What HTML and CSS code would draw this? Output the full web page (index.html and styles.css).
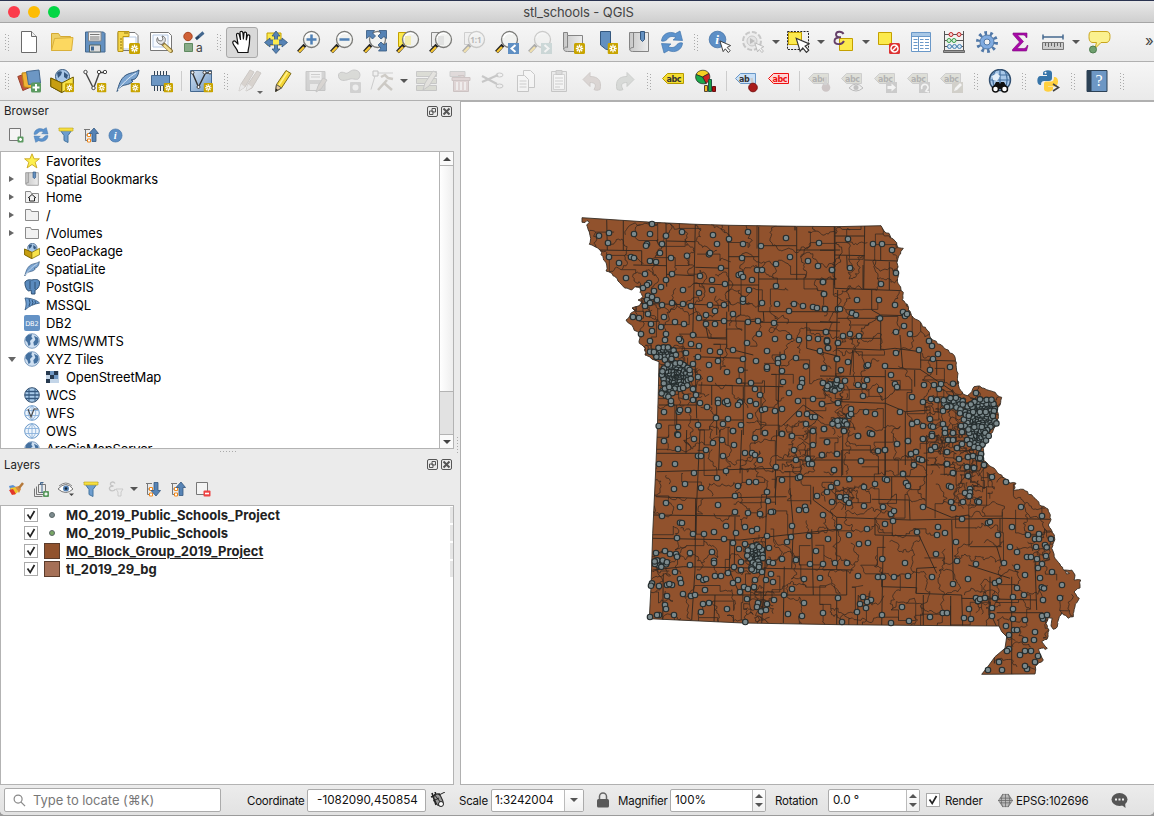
FILE: index.html
```html
<!DOCTYPE html>
<html lang="en">
<head>
<meta charset="utf-8">
<title>stl_schools - QGIS</title>
<link rel="stylesheet" href="styles.css">
</head>
<body>
<svg class="paints" width="0" height="0">
  <defs>
    <linearGradient id="steel" x1="0" y1="0" x2="1" y2="1"><stop offset="0" stop-color="#d3e2f2"/><stop offset="1" stop-color="#6b95c4"/></linearGradient>
    <linearGradient id="paper" x1="0" y1="0" x2="1" y2="0"><stop offset="0" stop-color="#c8c8c8"/><stop offset="1" stop-color="#ededed"/></linearGradient>
  </defs>
</svg>
<svg class="symbols">
  <symbol id="star-badge" viewBox="0 0 11 11"><rect width="11" height="11" rx="1.500" fill="#c8a400"/><path d="M5.500 1.500v8M1.800 5.500h7.400M2.800 2.800l5.400 5.400M8.200 2.800L2.800 8.200" stroke="#fff" stroke-width="1.300"/><circle cx="5.500" cy="5.500" r="1" fill="#c8a400"/></symbol>
  <symbol id="new" viewBox="0 0 24 24"><path d="M4.500 1.500h10l5 5v16h-15z" fill="#fff" stroke="#6a6a6a"/><path d="M14.500 1.500v5h5" fill="#eee" stroke="#6a6a6a"/></symbol>
  <symbol id="open" viewBox="0 0 24 24"><path d="M1.500 20.500v-17h7l2 3h10v3" fill="#edd067" stroke="#d4a931"/><path d="M1.500 20.500l3-12 18.500-1-1.500 13z" fill="#fcd860" stroke="#d9b03a"/></symbol>
  <symbol id="save" viewBox="0 0 24 24"><path d="M2.500 2h18l1.500 1.500v18.500h-19.500z" fill="#6390c0" stroke="#44688f"/><path d="M5.500 2h12.500v9h-12.500z" fill="#f2f2f2" stroke="#888"/><path d="M7 4.500h9.500M7 7h9.500M7 9h9.500" stroke="#777"/><path d="M6.500 15h11v7h-11z" fill="#ddd" stroke="#566"/><path d="M8 16.500h3v4H8z" fill="#3f6690"/></symbol>
  <symbol id="layout" viewBox="0 0 24 24"><path d="M2 2.500h17l3 3v15H2z" fill="#fff" stroke="#777"/><path d="M6 7h14v12H6z" fill="none" stroke="#b7cae4"/><path d="M2 1.500h11v5H7v15H2z" fill="#f5d64c" stroke="#b99513"/><path d="M9 2v2M11 2v2M4 9h2M4 12h2M4 15h2M4 18h2" stroke="#8c7410"/><use href="#star-badge" x="13" y="13" width="11" height="11"/></symbol>
  <symbol id="manager" viewBox="0 0 24 24"><path d="M1.500 2.500h18l3 3v15h-21z" fill="#fff" stroke="#777"/><path d="M4 5h15v12H4z" fill="#f7faff" stroke="#b7cae4"/><path d="M13 13l9 8" stroke="#8c7433" stroke-width="4" stroke-linecap="round"/><path d="M15.500 15.500l6 5.500" stroke="#f1dc8e" stroke-width="2.400" stroke-linecap="round"/><path d="M8.500 7.500l1 3 3 .5 1.500-2-1-3c3 .5 4 3 3 5.500l-3 3c-4 0-6.500-3-4.500-7z" fill="#e4e4e4" stroke="#777"/></symbol>
  <symbol id="style" viewBox="0 0 24 24"><circle cx="6" cy="6.500" r="4.200" fill="#cf6035" stroke="#a8441f"/><path d="M14 9l7.500-6.500" stroke="#44688f" stroke-width="3"/><path d="M14 9l3-2.500" stroke="#26415e" stroke-width="2"/><path d="M2.500 13.500h8v8h-8z" fill="#87ab87" stroke="#5f8a60"/><text x="14" y="22" class="ic-sans">a</text></symbol>
  <symbol id="pan" viewBox="0 0 24 24"><path d="M8 22.500C7.500 19 4.500 17 3 13.500 2 11.500 4 10 5.500 11.500L8 14 6.500 5C6.300 3 8.700 2.600 9.200 4.500l1.300 5-.5-6.700c0-2 2.600-2 2.900 0l.5 6.200.6-5.700c.2-1.800 2.600-1.500 2.600.3l-.3 6.200 1-4c.5-1.600 2.700-1.200 2.500.6L19.300 14c-.3 4-1.300 5-1.300 8.500z" fill="#fff" stroke="#111" stroke-width="1.200" stroke-linejoin="round"/></symbol>
  <symbol id="pan-sel" viewBox="0 0 24 24"><path d="M3 3h14v12H3z" fill="#fcea4d" stroke="#c4a000"/><path d="M12 1l4 5h-2.500v4H18V8l5.500 4.500L18 17v-2.500h-4.500V19H16l-4 4.500L8 19h2.500v-4.500H6V17L.5 12.500 6 8v2h4.500V6H8z" fill="#5683b5" stroke="#35587f" stroke-width=".8"/><path d="M9 9.500h6v5H9z" fill="#fcea4d"/></symbol>
  <symbol id="lens" viewBox="0 0 24 24"><path d="M8 15L1.500 22" stroke="#222" stroke-width="4"/><path d="M7 17l-5 5" stroke="#f5c431" stroke-width="2.300"/><circle cx="14.500" cy="9.500" r="8" fill="#f1f2f0" stroke="#7b7b78" stroke-width="1.300"/><path d="M8.500 8c1-4 5-6 9-4" fill="none" stroke="#fff" stroke-width="1.500"/></symbol>
  <symbol id="zin" viewBox="0 0 24 24"><use href="#lens" width="24" height="24"/><path d="M14.500 4.500v10M9.500 9.500h10" stroke="#4f80b6" stroke-width="2.500"/></symbol>
  <symbol id="zout" viewBox="0 0 24 24"><use href="#lens" width="24" height="24"/><path d="M9.500 9.500h10" stroke="#4f80b6" stroke-width="2.500"/></symbol>
  <symbol id="zfull" viewBox="0 0 24 24"><use href="#lens" width="24" height="24"/><path d="M3.500.5h8l-2 2.500 3 3-3 3-3-3-3 2.500zM23.500.5v8l-2.500-2-3 2.500-3-3 3-3-2-2.500zM23.500 21h-8l2.500-3-3-3 3-3 3 3 2.500-2z" fill="#5683b5" stroke="#35587f" stroke-width=".8"/></symbol>
  <symbol id="zsel" viewBox="0 0 24 24"><path d="M2.500 2.500h12v14h-12z" fill="#fcea4d" stroke="#c4a000"/><use href="#lens" width="24" height="24"/><path d="M9 6h6v9H9z" fill="#f3eaa0" opacity=".8"/></symbol>
  <symbol id="zlayer" viewBox="0 0 24 24"><path d="M2.500 2.500h12v14h-12z" fill="#eee" stroke="#888"/><use href="#lens" width="24" height="24"/><path d="M9 6h6v9H9z" fill="#ddd" opacity=".8"/></symbol>
  <symbol id="znative" viewBox="0 0 24 24"><path d="M2.500 2.500h10v12h-10z" fill="#eee" stroke="#888"/><use href="#lens" width="24" height="24"/><text x="8.200" y="13" class="ic-tiny">1:1</text></symbol>
  <symbol id="zlast" viewBox="0 0 24 24"><use href="#lens" width="24" height="24"/><path d="M13 13h11v11H13z" fill="#5f8fc3"/><path d="M20.500 15l-4 3.500 4 3.500" fill="none" stroke="#fff" stroke-width="2"/></symbol>
  <symbol id="znext" viewBox="0 0 24 24"><use href="#lens" width="24" height="24"/><path d="M13 13h11v11H13z" fill="#8aa"/><path d="M16.500 15l4 3.500-4 3.500" fill="none" stroke="#fff" stroke-width="2"/></symbol>
  <symbol id="newmap" viewBox="0 0 24 24"><path d="M2.500 2.500h4v3h15v16h-15c-3 0-4-1-4-4z" fill="url(#paper)" stroke="#848484"/><path d="M6.500 5.500v12c-1.500-1-3 0-3.500 1" fill="none" stroke="#848484"/><use href="#star-badge" x="13" y="13" width="11" height="11"/></symbol>
  <symbol id="newbm" viewBox="0 0 24 24"><path d="M6.500 1.500h10v19l-5-1.500-5-4z" fill="#6390c0" stroke="#35587f"/><use href="#star-badge" x="13.500" y="13" width="11" height="11"/></symbol>
  <symbol id="bookmark" viewBox="0 0 24 24"><path d="M2.500 2.500h19v19h-16c-2 0-3-1-3-3z" fill="url(#paper)" stroke="#848484"/><path d="M6.500 2.500v15c-2 0-3.500.5-3.500 2" fill="none" stroke="#848484"/><path d="M13.500 1.500h4v8l-2 2-2-2z" fill="#6390c0" stroke="#35587f"/></symbol>
  <symbol id="refresh" viewBox="0 0 24 24"><path d="M1.500 11C2 4 9 .5 15.500 3.500L20 1l2.500 9.500-9.500-.5 3-2.500c-4-2-7-1-9 2-1.500 1.500-3.500 2-5.500 1.500z" fill="#5d93cd" stroke="#4377ad" stroke-width=".7"/><path d="M22.500 13C22 20 15 23.500 8.500 20.500L4 23l-2.500-9.500 9.500.5-3 2.500c4 2 7 1 9-2 1.500-1.500 3.500-2 5.500-1.500z" fill="#5d93cd" stroke="#4377ad" stroke-width=".7"/></symbol>
  <symbol id="info" viewBox="0 0 24 24"><circle cx="12" cy="12" r="10.500" fill="#5d8fc6" stroke="#4474a8"/><text x="9" y="18" class="ic-info">i</text></symbol>
  <symbol id="cursor" viewBox="0 0 14 14"><path d="M1 1l3.500 11.500 2.300-3 3.200 4 2-2-3.200-3.500L12.500 6z" fill="#fff" stroke="#333"/></symbol>
  <symbol id="identify" viewBox="0 0 24 24"><use href="#info" x="0" y="0" width="19" height="19"/><use href="#cursor" x="11" y="10" width="13" height="13"/></symbol>
  <symbol id="gear" viewBox="0 0 24 24"><circle cx="12" cy="12" r="9" fill="none" stroke="#5078a8" stroke-width="4" stroke-dasharray="2.600 3.055"/><circle cx="12" cy="12" r="7" fill="#80abe0" stroke="#5078a8"/><circle cx="12" cy="12" r="3" fill="#f2f2f2" stroke="#5078a8"/></symbol>
  <symbol id="action" viewBox="0 0 24 24"><circle cx="11" cy="11" r="9" fill="#e6e6e6" stroke="#777" stroke-width="2" stroke-dasharray="5 2"/><circle cx="11" cy="11" r="5" fill="#ccc" stroke="#777"/><path d="M9 8l5 3-5 3z" fill="#555"/><use href="#cursor" x="13" y="12" width="11" height="11"/></symbol>
  <symbol id="select" viewBox="0 0 24 24"><path d="M1.500 1.500h21v18h-21z" fill="none" stroke="#222" stroke-dasharray="2 1.200"/><path d="M2.500 2.500h13v12h-13z" fill="#fcea4d" stroke="#c4a000"/><use href="#cursor" x="9" y="7" width="16" height="16"/></symbol>
  <symbol id="selexpr" viewBox="0 0 24 24"><path d="M8.500 8.500h13v12h-13z" fill="#fcea4d" stroke="#c4a000"/><path d="M12.500 4C11 .8 5 1 5 4.500c0 2 2 2.800 5 2.800C6 7.300 3.500 8 3.500 11c0 4 7.500 4.200 9.500 0" fill="none" stroke="#653f68" stroke-width="1.900"/></symbol>
  <symbol id="deselect" viewBox="0 0 24 24"><path d="M2.500 2.500h13v12h-13z" fill="#fcea4d" stroke="#c4a000"/><rect x="13" y="13" width="11" height="11" rx="1.500" fill="#d33"/><circle cx="18.500" cy="18.500" r="3.500" fill="none" stroke="#fff" stroke-width="1.500"/><path d="M16 21l5-5" stroke="#fff" stroke-width="1.500"/></symbol>
  <symbol id="table" viewBox="0 0 24 24"><path d="M2.500 2.500h19v19h-19z" fill="#fff" stroke="#6a98c8"/><path d="M3 3h18v3H3z" fill="#a9c8e6"/><path d="M3 6.500h18M9.500 7v14M4.500 9.500h4M4.500 12.500h4M4.500 15.500h4M4.500 18.500h4M11 9.500h3.500M16 9.500h4M11 12.500h3.500M16 12.500h4M11 15.500h3.500M16 15.500h4M11 18.500h3.500M16 18.500h4" stroke="#6a98c8"/></symbol>
  <symbol id="abacus" viewBox="0 0 24 24"><path d="M2.500 1v20M21.500 1v20M3 4.500h18M3 10.500h18M3 16.500h18" stroke="#555"/><path d="M1.500 20.500h21v2h-21z" fill="#999" stroke="#666"/><g fill="#f6d5d5" stroke="#bf2424"><circle cx="9" cy="4.500" r="2"/><circle cx="17" cy="4.500" r="2"/></g><g fill="#d9f1db" stroke="#3a9e48"><circle cx="7" cy="10.500" r="2"/><circle cx="12" cy="10.500" r="2"/></g><g fill="#d7e6f3" stroke="#4580b4"><circle cx="7.500" cy="16.500" r="2"/><circle cx="12.500" cy="16.500" r="2"/><circle cx="17.500" cy="16.500" r="2"/></g></symbol>
  <symbol id="sigma" viewBox="0 0 24 24"><path d="M5 3h14v4.500h-1c-.5-2-1.500-2.500-3.500-2.500H9.500l6 6.500-6.500 7h6.500c2 0 3-1 3.500-3h1L18.500 21H4.500v-1.500l7-7.500L5 4.500z" fill="#a80aa8" stroke="#7d087d" stroke-width=".6"/></symbol>
  <symbol id="measure" viewBox="0 0 24 24"><path d="M2 7h20M2 4.500v5M22 4.500v5" stroke="#44688f" stroke-width="1.500"/><path d="M1.500 12.500h21v7h-21z" fill="#ccc" stroke="#777"/><path d="M4.500 13v3M7.500 13v4M10.500 13v3M13.500 13v4M16.500 13v3M19.500 13v4" stroke="#666"/></symbol>
  <symbol id="tip" viewBox="0 0 24 24"><path d="M5 1.500h14c3 0 4 1.500 4 5s-1 6-4 6h-5l-6 6 1.500-6H6c-3 0-4-2-4-6s1-5 3-5z" fill="#fbf18f" stroke="#c9a51c"/><circle cx="6" cy="19.500" r="3.500" fill="#6fa06f" stroke="#4d7b4d"/></symbol>
  <symbol id="datasrc" viewBox="0 0 24 24"><path d="M.8 7.500l8-3 4 14-7 3z" fill="#c2543a" stroke="#98402c"/><path d="M5 4l10-1 1 16-9-1z" fill="#f0b236" stroke="#b98217"/><path d="M9.500 2.500L22 1l1.500 13-12 1.500z" fill="#6d97c4" stroke="#44688f"/><rect x="14" y="13.500" width="10" height="10" rx="1.500" fill="#5b9a60"/><path d="M19 15v7M15.500 18.500h7" stroke="#fff" stroke-width="2"/></symbol>
  <symbol id="globe" viewBox="0 0 24 24"><circle cx="12" cy="12" r="11" fill="#cfe0f2" stroke="#4b76a5"/><path d="M3 6c3-4 7-4.500 9-4l-1 4 2 2-4 4 1 5-3 3-2-6-3-3zM15 4l6 3 1 6-3 5-4 1-1-5 3-4z" fill="#44709f"/></symbol>
  <symbol id="gpkg" viewBox="0 0 24 24"><circle cx="12.500" cy="7.500" r="7" fill="#a9c8e8" stroke="#35587f"/><path d="M7 4c2-2 4-2 5-1l-1 3-3 3zM14 3l4 3-1 4-3-2z" fill="#35587f"/><path d="M.8 9l11 5 11.500-6v9.500l-11.500 6-11-6z" fill="#f8e34b" stroke="#6d5a00"/><path d="M.8 9l11 5v9.500l-11-6z" fill="#c79e10" stroke="#6d5a00"/></symbol>
  <symbol id="gpkgnew" viewBox="0 0 24 24"><use href="#gpkg" width="24" height="24"/><use href="#star-badge" x="15" y="14" width="9" height="9.500"/></symbol>
  <symbol id="shp" viewBox="0 0 24 24"><path d="M2.500 3.500l8 16 6-16h6" fill="none" stroke="#444" stroke-width="1.400"/><g fill="#fff" stroke="#444"><circle cx="2.500" cy="3" r="1.700"/><circle cx="10.500" cy="19" r="1.700"/><circle cx="16" cy="3" r="1.700"/><circle cx="22" cy="3" r="1.700"/></g><use href="#star-badge" x="14" y="14" width="9.500" height="9.500"/></symbol>
  <symbol id="feather" viewBox="0 0 24 24"><path d="M1 22.500C3 16 4 10 10 6c4-2.500 9-2 13-5-.5 4-1 6-4 9l-4 1 2 1c-3 4-8 3.500-11 5-2 1-3 3-5 5.500z" fill="#7ba4d0" stroke="#36597f"/><path d="M2 21C7 14 12 9 20 4" fill="none" stroke="#e0ecf8"/></symbol>
  <symbol id="feathernew" viewBox="0 0 24 24"><use href="#feather" width="24" height="24"/><use href="#star-badge" x="14.500" y="14" width="9.500" height="9.500"/></symbol>
  <symbol id="chip" viewBox="0 0 24 24"><path d="M5.500 2v20M8.500 2v20M11.500 2v20M14.500 2v20M17.500 2v20" stroke="#345"/><path d="M2.500 6.500h18v10h-18z" fill="#6d97c4" stroke="#44688f"/><use href="#star-badge" x="14.500" y="14" width="9.500" height="9.500"/></symbol>
  <symbol id="virt" viewBox="0 0 24 24"><path d="M1.500 1.500h21v21h-21z" fill="url(#steel)" stroke="#44688f"/><path d="M3.500 4l6 14 7-14h5" fill="none" stroke="#333" stroke-width="1.400"/><g fill="#fff" stroke="#444"><circle cx="3.500" cy="3.500" r="1.500"/><circle cx="9.500" cy="18" r="1.500"/><circle cx="15.500" cy="3.500" r="1.500"/><circle cx="21" cy="3.500" r="1.500"/></g><use href="#star-badge" x="14.500" y="14" width="9.500" height="9.500"/></symbol>
  <symbol id="pencils" viewBox="0 0 24 24"><path d="M1 22l2-7L12 1l4 2L7 18zM8 22l2-7 9-13 4 2-9 15z" fill="#a99a8c" stroke="#80756c"/><path d="M1 22l2-7 4 3zM8 22l2-7 4 3z" fill="#ddd"/></symbol>
  <symbol id="pencil" viewBox="0 0 24 24"><path d="M4.500 22.500l1-7L15 1.500l5 3L10.500 19z" fill="#f3d434" stroke="#7e6b1b"/><path d="M8 16l8.500-13" stroke="#fff18b" stroke-width="1.500"/><path d="M4.500 22.500l1-7 5 3.500z" fill="#e5c9a0" stroke="#555"/><path d="M4.500 22.500l.5-3 2 1.500z" fill="#222"/></symbol>
  <symbol id="saveedit" viewBox="0 0 24 24"><path d="M2 2.500h19v19H2z" fill="#999" stroke="#777"/><path d="M5.500 3h12v8h-12z" fill="#eee"/><path d="M7 5.500h9M7 8h9" stroke="#888"/><path d="M6 15h8v6H6z" fill="#ddd"/><path d="M12 23l2-6 5-8 4 2-6 9z" fill="#aaa097" stroke="#777"/></symbol>
  <symbol id="addpoly" viewBox="0 0 24 24"><path d="M2 9C0 4 4 2 8 4c3 1.500 5-3 9-3 6 0 7 5 5 8-1 3-6 0-9 1s-9 3-11-1z" fill="#a9aca2" stroke="#777"/><rect x="13" y="13" width="11" height="11" rx="1" fill="#999"/><circle cx="18.500" cy="18.500" r="3" fill="#eee"/></symbol>
  <symbol id="vertex" viewBox="0 0 24 24"><path d="M6 3.500l-5 17M5 4h18" stroke="#888"/><path d="M3 2h5v5H3z" fill="#eee" stroke="#666"/><path d="M8 21l9-10M11 8l4-2 3 3 5 1M14 14l8 7" stroke="#887f70" stroke-width="2.500" fill="none"/></symbol>
  <symbol id="modify" viewBox="0 0 24 24"><path d="M1.500 2.500h20v5h-20zM1.500 9.500h20v5h-20zM1.500 16.500h20v5h-20z" fill="#afb29c" stroke="#777"/><path d="M8 21l2-7 8-12 4 2-8 13z" fill="#c9c5bb" stroke="#777"/></symbol>
  <symbol id="delete" viewBox="0 0 24 24"><path d="M2 2.500h15v5H2z" fill="#beaaaa" stroke="#888"/><path d="M5.500 11.500h15v11h-15zM4 8.500h18v3H4zM10 6.500h6v2" fill="#c0a1a1" stroke="#8c6f6f"/><path d="M9 13v8M13 13v8M17 13v8" stroke="#fff" stroke-width="1.500"/></symbol>
  <symbol id="cut" viewBox="0 0 24 24"><path d="M1 7l15 8M1 13l16-7" stroke="#777" stroke-width="2"/><ellipse cx="18.500" cy="6" rx="3.500" ry="2" fill="none" stroke="#777"/><ellipse cx="18.500" cy="17" rx="3.500" ry="2" fill="none" stroke="#777"/></symbol>
  <symbol id="copy" viewBox="0 0 24 24"><path d="M9.500 1.500h7l4 4v13h-11z" fill="#fff" stroke="#777"/><path d="M3.500 6.500h7l4 4v12h-11z" fill="#fff" stroke="#777"/><path d="M5.500 12h7M5.500 15h7M5.500 18h7" stroke="#888"/></symbol>
  <symbol id="paste" viewBox="0 0 24 24"><path d="M4.500 2.500h15v20h-15z" fill="#ddd" stroke="#777"/><path d="M6.500 5.500h11v15h-11z" fill="#fff" stroke="#999"/><path d="M9 1.500h6v4H9z" fill="#aaa" stroke="#777"/><path d="M8 9h8M8 12h8M8 15h8M8 18h5" stroke="#888"/></symbol>
  <symbol id="undo" viewBox="0 0 24 24"><path d="M3 10.500l7-7v4c8 0 12 4 10 13-3 1-4 1-6 0 3-5 1-7-4-7v4z" fill="#b1a19b" stroke="#8d7f7a"/></symbol>
  <symbol id="redo" viewBox="0 0 24 24"><path d="M21 10.500l-7-7v4c-8 0-12 4-10 13 3 1 4 1 6 0-3-5-1-7 4-7v4z" fill="#a8aea8" stroke="#838983"/></symbol>
  <symbol id="label" viewBox="0 0 24 24"><path d="M1.500 9.500l5-5h16v10h-16z" fill="#f4dd31" stroke="#b59a00"/><text x="5.500" y="12.500" class="ic-abc">abc</text></symbol>
  <symbol id="labelgrey" viewBox="0 0 24 24"><path d="M1.500 9.500l5-5h15v10h-15z" fill="#b8baa6" stroke="#888"/><text x="5" y="12.500" class="ic-abc">abc</text></symbol>
  <symbol id="diagram" viewBox="0 0 24 24"><path d="M8.500 8L2 5.500c2-5 10-6 13-1z" fill="#f5cf22" stroke="#222" stroke-width=".7"/><path d="M8.500 8L15 4.500c2 4 0 8-3 10z" fill="#c22" stroke="#222" stroke-width=".7"/><path d="M8.500 8l3.500 6.500C6 16 0 12 2 5.500z" fill="#1ba84a" stroke="#222" stroke-width=".7"/><path d="M10.500 16.500h3v6h-3z" fill="#f4b81f" stroke="#543"/><path d="M14.500 10.500h3v12h-3z" fill="#18a548" stroke="#254"/><path d="M18.500 17.500h3v5h-3z" fill="#b10d0d" stroke="#611"/></symbol>
  <symbol id="pinlabel" viewBox="0 0 24 24"><path d="M1.500 9.500l5-5h15v10h-15z" fill="#c9e0f7" stroke="#6a98c8"/><text x="5" y="12.500" class="ic-abc">ab</text><path d="M17.500 9l1.500 9" stroke="#ccc" stroke-width="2.500"/><circle cx="19" cy="18.500" r="4.300" fill="#a81c1c" stroke="#7c1212"/></symbol>
  <symbol id="redlabel" viewBox="0 0 24 24"><path d="M1.500 9.500l5-5h15v10h-15z" fill="#ffd6d6" stroke="#e11"/><text x="5.500" y="12.500" class="ic-abc ic-red">abc</text></symbol>
  <symbol id="g1" viewBox="0 0 24 24"><use href="#labelgrey" width="24" height="24"/><circle cx="19" cy="18.500" r="4.300" fill="#8d7777"/><path d="M18.500 8v8" stroke="#999" stroke-width="3"/></symbol>
  <symbol id="g2" viewBox="0 0 24 24"><use href="#labelgrey" width="24" height="24"/><path d="M9 19q7-8 14 0-7 6-14 0z" fill="#eee" stroke="#555"/><circle cx="16" cy="18.500" r="2.500" fill="#666"/></symbol>
  <symbol id="g3" viewBox="0 0 24 24"><use href="#labelgrey" width="24" height="24"/><path d="M13 13h11v11H13z" fill="#888"/><path d="M14.500 17h4v-2.500l4.500 4-4.500 4V20h-4z" fill="#fff"/></symbol>
  <symbol id="g4" viewBox="0 0 24 24"><use href="#labelgrey" width="24" height="24"/><path d="M13 13h11v11H13z" fill="#888"/><path d="M16 20a3.200 3.200 0 1 1 4 1.500M22 19l-2 3 3 1" fill="none" stroke="#fff" stroke-width="1.700"/></symbol>
  <symbol id="g5" viewBox="0 0 24 24"><use href="#labelgrey" width="24" height="24"/><path d="M13 13h11v11H13z" fill="#999483"/><path d="M15 22l1-3 5-5 2 2-5 5z" fill="#fff"/></symbol>
  <symbol id="metasearch" viewBox="0 0 24 24"><circle cx="12" cy="11" r="10.500" fill="#a8c7e8" stroke="#2f4c6c" stroke-width="1.400"/><path d="M3 6h18M1.500 11h21M12 .5v20M7 2c-3 6-3 11 0 17M17 2c3 6 3 11 0 17" fill="none" stroke="#45709e" stroke-width="1.200"/><path d="M4 7l5-3 3 3-3 5-4-1z" fill="#e5eff9"/><path d="M4 20l4-7h3l1 2 1-2h3l4 7z" fill="#111"/><circle cx="7.500" cy="20" r="3" fill="#fff" stroke="#111" stroke-width="1.500"/><circle cx="16.500" cy="20" r="3" fill="#fff" stroke="#111" stroke-width="1.500"/></symbol>
  <symbol id="python" viewBox="0 0 24 24"><path d="M7 6V4c0-3 9-4 9 0v5c0 2-1 3-3 3H8c-2 0-3 1-3 4H4C.5 16 .5 7 4 7h7V6z" fill="#3775a9"/><path d="M17 18v2c0 3-9 4-9 0v-5c0-2 1-2.500 3-2.500h4c2 0 3-1.500 3-4.500h1c4 0 4 9 0 9.500h-7v.5z" fill="#ffd03f"/><circle cx="9.500" cy="3.700" r="1" fill="#fff"/><path d="M17 15l5.500 3.500L17 22" fill="none" stroke="#444" stroke-width="1.600"/></symbol>
  <symbol id="help" viewBox="0 0 24 24"><path d="M2 1.500h20v21H2z" fill="#6d97c4" stroke="#2c4155"/><path d="M2 1.500h4.500v21H2z" fill="#2c4155"/><text x="10.500" y="17" class="ic-help">?</text></symbol>
  <symbol id="addsel" viewBox="0 0 16 16"><path d="M1.500 1.500h11v12h-11z" fill="#f4f4f4" stroke="#777"/><rect x="9.500" y="9.500" width="6" height="6" rx="1" fill="#5b9a60"/><path d="M11 12.500h3M12.500 11v3" stroke="#fff" stroke-width="1.600"/></symbol>
  <symbol id="remsel" viewBox="0 0 16 16"><path d="M1.500 1.500h11v12h-11z" fill="#f4f4f4" stroke="#777"/><rect x="8.500" y="9.500" width="7" height="6" rx="1" fill="#ee4343"/><path d="M10 12.500h4" stroke="#fff" stroke-width="1.600"/></symbol>
  <symbol id="filter" viewBox="0 0 16 16"><path d="M1 1.500h14l-5 7v7l-4-2v-5z" fill="#6d9dcf" stroke="#44749f"/><path d="M1 1h14v3H1z" fill="#f5df42" stroke="#bfa414" stroke-width=".6"/></symbol>
  <symbol id="treeup" viewBox="0 0 16 16"><path d="M1 2.500h6M2.500 2.500v11h3M2.500 8h3" fill="none" stroke="#777"/><path d="M4.500 6.500h3v3h-3zM4.500 12h3v3h-3z" fill="#fff" stroke="#f28a1c"/><path d="M9 14.500V6.500H6L11 1l4.500 5.500H13v8z" fill="#5683b5" stroke="#35587f" stroke-width=".8"/></symbol>
  <symbol id="treedown" viewBox="0 0 16 16"><path d="M1 2.500h6M2.500 2.500v11h3M2.500 8h3" fill="none" stroke="#777"/><path d="M4.500 6.500h3v3h-3zM4.500 12h3v3h-3z" fill="#fff" stroke="#f28a1c"/><path d="M9 1.500v8H6l5 5.500 4.500-5.500H13v-8z" fill="#5683b5" stroke="#35587f" stroke-width=".8"/></symbol>
  <symbol id="brush" viewBox="0 0 16 16"><path d="M1 5l4-1 3 2-2 5H3z" fill="#5b8fd4"/><path d="M2 7l6-1 2 5-4 3z" fill="#f0c62c"/><path d="M1 9l4-1 3 5-4 1z" fill="#e2382d"/><path d="M7 6l4 6 2-4-2-3z" fill="#d98a3d"/><path d="M11 7l4-5" stroke="#b5793a" stroke-width="2.500"/></symbol>
  <symbol id="addgroup" viewBox="0 0 16 16"><path d="M5.500 3.500h7v8h-7zM3.500 5.500v8h8M1.500 7.500v8h8" fill="none" stroke="#777"/><path d="M9 1v11M7.500 4V1.500h3" stroke="#44688f" fill="none"/><rect x="10" y="10" width="6" height="6" rx="1" fill="#5b9a60"/><path d="M11.500 13h3M13 11.500v3" stroke="#fff" stroke-width="1.300"/></symbol>
  <symbol id="eye" viewBox="0 0 16 16"><path d="M0 8q8-9 15 0-7 7-15 0z" fill="#fff" stroke="#777"/><circle cx="8" cy="7.500" r="3" fill="#5683b5"/><circle cx="8" cy="7.500" r="1.300" fill="#123"/><path d="M1 5q7-6 13 0" fill="none" stroke="#888"/><path d="M11 12.500h5l-2.500 2.500z" fill="#444"/></symbol>
  <symbol id="exprfilter" viewBox="0 0 16 16"><path d="M7 2.500C5.500 0 2 1 2.500 3.500 3 5 5 5 5.500 5 3 5 1 6 1.500 8c.5 2.500 4.500 2.500 6 0" fill="none" stroke="#777" stroke-width="1.300"/><path d="M8 8h7l-2 3v4h-3v-4z" fill="#eee" stroke="#888"/></symbol>
  <symbol id="fav" viewBox="0 0 16 16"><path d="M8 .8l2.100 5h5.300l-4.200 3.500 1.700 5.600L8 11.500l-4.900 3.400 1.700-5.600L.6 5.800h5.300z" fill="#fdf04f" stroke="#c9a61d" stroke-width=".9"/></symbol>
  <symbol id="folder" viewBox="0 0 16 16"><path d="M1.500 13.500v-11h5l1 2h7v9z" fill="#f1f1f1" stroke="#8a8a8a"/></symbol>
  <symbol id="home" viewBox="0 0 16 16"><use href="#folder" width="16" height="16"/><path d="M4 9l4-3.500L12 9M5.500 8.500V12h5V8.500" fill="none" stroke="#222"/></symbol>
  <symbol id="postgis" viewBox="0 0 16 16"><path d="M1 3c2-3 6-2 7-2 3-1 7-1 7.500 2 .5 3-1 6-3 7.500l-1.500.5v4H7.500l-.5-4-2 1C2.500 12 .5 6 1 3z" fill="#5a8abd" stroke="#2e5175"/><path d="M6 2v8M11 3v7" stroke="#2e5175" fill="none"/></symbol>
  <symbol id="mssql" viewBox="0 0 16 16"><path d="M1 1c5 0 12 2 14.500 5C10 7 5 9 1 13c1.500-4 1.500-8 0-12z" fill="#6b9cd0" stroke="#44688f"/><path d="M5 2q2 4 0 7M8 3q2 3 0 5M11 4q1 2 0 3" fill="none" stroke="#2e5175"/></symbol>
  <symbol id="db2" viewBox="0 0 16 16"><rect width="16" height="16" rx="2" fill="#6492c5"/><text x="1.200" y="10.500" class="ic-db2">DB2</text></symbol>
  <symbol id="osm" viewBox="0 0 16 16"><path d="M2 2h13v12H2z" fill="#c3d5e8"/><path d="M2 2h4v4H2zM10 2h4v4h-4zM6 6h4v4H6zM2 10h4v4H2z" fill="#26394f"/><path d="M10 6h4v4h-4zM6 2h4v4H6z" fill="#6e97c4"/></symbol>
  <symbol id="wcs" viewBox="0 0 16 16"><circle cx="8" cy="8" r="7.300" fill="#a9cbea" stroke="#2f4c6c"/><path d="M2 4.500h12M1 8h14M2 11.500h12" stroke="#35587f" stroke-width="1.600"/><path d="M5 1.500v13M11 1.500v13" stroke="#35587f"/></symbol>
  <symbol id="ows" viewBox="0 0 16 16"><circle cx="8" cy="8" r="7.300" fill="#eef5fc" stroke="#6a98c8"/><path d="M1 5.500h14M1 10.500h14M8 1v14M8 1C3 5 3 11 8 15M8 1c5 4 5 10 0 14" fill="none" stroke="#8bb2db" stroke-width=".9"/></symbol>
  <symbol id="wfs" viewBox="0 0 16 16"><use href="#ows" width="16" height="16"/><path d="M4 4l3 8 3-8h4" fill="none" stroke="#444" stroke-width="1.100"/></symbol>
  <symbol id="mouse" viewBox="0 0 16 16"><path d="M2 1l4 12M5 0l4 10M1 5l9-3" stroke="#222" stroke-width="1.600"/><rect x="5" y="2" width="7" height="12" rx="3.500" fill="#999" stroke="#222" transform="rotate(-25 8 8)"/><path d="M9 3l6-3M3 9l6-3M4 2l7 9" stroke="#222"/><circle cx="11" cy="12" r="2.500" fill="#fff" stroke="#222"/></symbol>
  <symbol id="crs" viewBox="0 0 16 16"><path d="M5 1.500h6L15.500 8 11 14.500H5L.5 8z" fill="#bbb" stroke="#777" stroke-width=".8"/><path d="M2 5.500h12M0 8h16M2 10.500h12M8 1v14M5 1C3 6 3 10 5 15M11 1c2 5 2 9 0 14" fill="none" stroke="#666" stroke-width=".8"/></symbol>
  <symbol id="bubble" viewBox="0 0 16 16"><ellipse cx="8" cy="7.500" rx="8" ry="6.500" fill="#555"/><path d="M9 12l5 4-.5-6z" fill="#555"/><path d="M3.500 6.500h2v2h-2zM7 6.500h2v2H7zM10.500 6.500h2v2h-2z" fill="#eee"/></symbol>
</svg>

<div class="window">
  <header class="titlebar">
    <div class="lights"><i class="red"></i><i class="amber"></i><i class="green"></i></div>
    <div class="title">stl_schools - QGIS</div>
  </header>

  <div class="toolbar">
    <i class="grip first"></i>
    <button><svg><use href="#new"/></svg></button><button><svg><use href="#open"/></svg></button><button><svg><use href="#save"/></svg></button><button><svg><use href="#layout"/></svg></button><button><svg><use href="#manager"/></svg></button><button><svg><use href="#style"/></svg></button>
    <i class="grip"></i>
    <button class="active"><svg><use href="#pan"/></svg></button><button><svg><use href="#pan-sel"/></svg></button><button><svg><use href="#zin"/></svg></button><button><svg><use href="#zout"/></svg></button><button><svg><use href="#zfull"/></svg></button><button><svg><use href="#zsel"/></svg></button><button><svg><use href="#zlayer"/></svg></button><button class="off"><svg><use href="#znative"/></svg></button><button><svg><use href="#zlast"/></svg></button><button class="off"><svg><use href="#znext"/></svg></button><button><svg><use href="#newmap"/></svg></button><button><svg><use href="#newbm"/></svg></button><button><svg><use href="#bookmark"/></svg></button><button><svg><use href="#refresh"/></svg></button>
    <i class="grip"></i>
    <button><svg><use href="#identify"/></svg></button><button class="off"><svg><use href="#action"/></svg></button><i class="drop"></i>
    <button><svg><use href="#select"/></svg></button><i class="drop"></i>
    <button><svg><use href="#selexpr"/></svg></button><i class="drop"></i>
    <button><svg><use href="#deselect"/></svg></button><button><svg><use href="#table"/></svg></button><button><svg><use href="#abacus"/></svg></button><button><svg><use href="#gear"/></svg></button><button><svg><use href="#sigma"/></svg></button><button><svg><use href="#measure"/></svg></button><i class="drop"></i>
    <button><svg><use href="#tip"/></svg></button>
    <span class="more">»</span>
  </div>

  <div class="toolbar">
    <i class="grip first"></i>
    <button><svg><use href="#datasrc"/></svg></button><button><svg><use href="#gpkgnew"/></svg></button><button><svg><use href="#shp"/></svg></button><button><svg><use href="#feathernew"/></svg></button><button><svg><use href="#chip"/></svg></button><i class="sep"></i><button><svg><use href="#virt"/></svg></button>
    <i class="grip"></i>
    <button class="off menu"><svg><use href="#pencils"/></svg></button><button><svg><use href="#pencil"/></svg></button><button class="off"><svg><use href="#saveedit"/></svg></button><button class="off"><svg><use href="#addpoly"/></svg></button><button class="off"><svg><use href="#vertex"/></svg></button><i class="drop"></i>
    <button class="off"><svg><use href="#modify"/></svg></button><button class="off"><svg><use href="#delete"/></svg></button><button class="off"><svg><use href="#cut"/></svg></button><button class="off"><svg><use href="#copy"/></svg></button><button class="off"><svg><use href="#paste"/></svg></button><button class="off"><svg><use href="#undo"/></svg></button><button class="off"><svg><use href="#redo"/></svg></button>
    <i class="grip"></i>
    <button><svg><use href="#label"/></svg></button><button><svg><use href="#diagram"/></svg></button><i class="sep"></i><button><svg><use href="#pinlabel"/></svg></button><button><svg><use href="#redlabel"/></svg></button><i class="sep"></i><button class="off"><svg><use href="#g1"/></svg></button><button class="off"><svg><use href="#g2"/></svg></button><button class="off"><svg><use href="#g3"/></svg></button><button class="off"><svg><use href="#g4"/></svg></button><button class="off"><svg><use href="#g5"/></svg></button>
    <i class="grip"></i><button><svg><use href="#metasearch"/></svg></button>
    <i class="grip"></i><button><svg><use href="#python"/></svg></button>
    <i class="grip"></i><button><svg><use href="#help"/></svg></button><i class="grip"></i>
  </div>

  <main class="work">
    <aside class="docks">
      <section class="dock browser">
        <div class="dock-head"><span>Browser</span><svg class="dockbtn" viewBox="0 0 11 11"><rect x=".5" y=".5" width="10" height="10" rx="1.500"/><path d="M5 2.500h3.500V6H5zM2.500 5H6v3.500H2.500z"/></svg><svg class="dockbtn" viewBox="0 0 11 11"><rect x=".5" y=".5" width="10" height="10" rx="1.500"/><path d="M2.500 2.500l6 6M8.500 2.500l-6 6" stroke-width="2"/></svg></div>
        <div class="dock-tools"><button><svg><use href="#addsel"/></svg></button><button><svg><use href="#refresh"/></svg></button><button><svg><use href="#filter"/></svg></button><button><svg><use href="#treeup"/></svg></button><button><svg class="small"><use href="#info"/></svg></button></div>
        <div class="tree">
          <ul>
            <li><i></i><svg><use href="#fav"/></svg>Favorites</li>
            <li><i class="closed"></i><svg><use href="#bookmark"/></svg>Spatial Bookmarks</li>
            <li><i class="closed"></i><svg><use href="#home"/></svg>Home</li>
            <li><i class="closed"></i><svg><use href="#folder"/></svg>/</li>
            <li><i class="closed"></i><svg><use href="#folder"/></svg>/Volumes</li>
            <li><i></i><svg><use href="#gpkg"/></svg>GeoPackage</li>
            <li><i></i><svg><use href="#feather"/></svg>SpatiaLite</li>
            <li><i></i><svg><use href="#postgis"/></svg>PostGIS</li>
            <li><i></i><svg><use href="#mssql"/></svg>MSSQL</li>
            <li><i></i><svg><use href="#db2"/></svg>DB2</li>
            <li><i></i><svg><use href="#globe"/></svg>WMS/WMTS</li>
            <li><i class="opened"></i><svg><use href="#globe"/></svg>XYZ Tiles</li>
            <li class="child"><i></i><svg><use href="#osm"/></svg>OpenStreetMap</li>
            <li><i></i><svg><use href="#wcs"/></svg>WCS</li>
            <li><i></i><svg><use href="#wfs"/></svg>WFS</li>
            <li><i></i><svg><use href="#ows"/></svg>OWS</li>
            <li><i></i><svg><use href="#globe"/></svg>ArcGisMapServer</li>
          </ul>
          <div class="scrollbar"><b class="up"></b><span class="track"></span><span class="thumb"></span><b class="down"></b></div>
        </div>
      </section>
      <div class="hsplit"></div>
      <section class="dock layers">
        <div class="dock-head"><span>Layers</span><svg class="dockbtn" viewBox="0 0 11 11"><rect x=".5" y=".5" width="10" height="10" rx="1.500"/><path d="M5 2.500h3.500V6H5zM2.500 5H6v3.500H2.500z"/></svg><svg class="dockbtn" viewBox="0 0 11 11"><rect x=".5" y=".5" width="10" height="10" rx="1.500"/><path d="M2.500 2.500l6 6M8.500 2.500l-6 6" stroke-width="2"/></svg></div>
        <div class="dock-tools"><button><svg><use href="#brush"/></svg></button><button><svg><use href="#addgroup"/></svg></button><button><svg><use href="#eye"/></svg></button><button><svg><use href="#filter"/></svg></button><button class="off"><svg><use href="#exprfilter"/></svg></button><i class="drop"></i><button><svg><use href="#treedown"/></svg></button><button><svg><use href="#treeup"/></svg></button><button><svg><use href="#remsel"/></svg></button></div>
        <ul class="layerlist">
          <li><svg class="check" viewBox="0 0 14 14"><rect x=".5" y=".5" width="13" height="13"/><path d="M3.500 6.500l2.700 4 4.300-7.500"/></svg><i class="dot grey"></i><span>MO_2019_Public_Schools_Project</span></li>
          <li><svg class="check" viewBox="0 0 14 14"><rect x=".5" y=".5" width="13" height="13"/><path d="M3.500 6.500l2.700 4 4.300-7.500"/></svg><i class="dot leaf"></i><span>MO_2019_Public_Schools</span></li>
          <li><svg class="check" viewBox="0 0 14 14"><rect x=".5" y=".5" width="13" height="13"/><path d="M3.500 6.500l2.700 4 4.300-7.500"/></svg><i class="swatch brown"></i><span class="current">MO_Block_Group_2019_Project</span></li>
          <li><svg class="check" viewBox="0 0 14 14"><rect x=".5" y=".5" width="13" height="13"/><path d="M3.500 6.500l2.700 4 4.300-7.500"/></svg><i class="swatch tan"></i><span>tl_2019_29_bg</span></li>
        </ul>
      </section>
    </aside>
    <div class="vsplit"></div>
    <div class="canvas"><svg id="map" viewBox="461 102 693 682" width="693" height="682"></svg></div>
  </main>

  <footer class="status">
    <div class="field locate"><svg viewBox="0 0 14 14"><circle cx="5.500" cy="5.500" r="4.300"/><path d="M8.700 8.700l4.300 4.300"/></svg><span>Type to locate (⌘K)</span></div>
    <label class="l-coord">Coordinate</label>
    <div class="field coord"><span>-1082090,450854</span></div>
    <svg class="mouse"><use href="#mouse"/></svg>
    <label class="l-scale">Scale</label>
    <div class="field scale"><span>1:3242004</span><b><i class="tri"></i></b></div>
    <svg class="lock" viewBox="0 0 12 16"><path d="M2.500 8V4.500a3.500 3.500 0 0 1 7 0V8" fill="none" stroke="#666" stroke-width="1.500"/><rect y="7" width="12" height="8.500" rx="1.500" fill="#5a5a5a"/></svg>
    <label class="l-mag">Magnifier</label>
    <div class="field mag"><span>100%</span><b class="spin"><i class="tri flip"></i><i class="tri"></i></b></div>
    <label class="l-rot">Rotation</label>
    <div class="field rot"><span>0.0 °</span><b class="spin"><i class="tri flip"></i><i class="tri"></i></b></div>
    <svg class="check" viewBox="0 0 14 14"><rect x=".5" y=".5" width="13" height="13"/><path d="M3.500 6.500l2.700 4 4.300-7.500"/></svg>
    <label class="l-render">Render</label>
    <svg class="crs"><use href="#crs"/></svg>
    <label class="l-epsg">EPSG:102696</label>
    <svg class="bubble"><use href="#bubble"/></svg>
  </footer>
</div>
<script src="map.js"></script>
</body>
</html>
```

FILE: styles.css
```css
* { box-sizing: border-box; }
body { margin: 0; width: 1154px; height: 816px; overflow: hidden; background: #9b9b9b; font-family: Inter, "Noto Sans", sans-serif; font-size: 13px; color: #111; }
ul { list-style: none; margin: 0; padding: 0; }
button { border: 0; background: none; padding: 0; margin: 0; flex: none; }
i { flex: none; font-style: normal; }
.paints { position: absolute; }
.symbols { display: none; }
.window { display: flex; flex-direction: column; height: 815px; background: #ebebeb; border-top: 1px solid #2a3350; border-radius: 0 0 5px 5px; overflow: hidden; }

.titlebar { height: 22px; flex: none; display: flex; align-items: center; background: linear-gradient(#e9e9e9, #cfcfcf); border-bottom: 1px solid #a6a6a6; }
.lights { display: flex; gap: 8px; padding-left: 8px; width: 100px; }
.lights i { width: 12px; height: 12px; border-radius: 50%; }
.red { background: #fc3b4b; }
.amber { background: #fdbc02; }
.green { background: #02d644; }
.title { flex: 1; text-align: center; padding-right: 97px; color: #444; letter-spacing: -.1px; }

.toolbar { height: 39px; flex: none; display: flex; align-items: center; background: linear-gradient(#f6f6f6, #eaeaea); border-bottom: 1px solid #b0b0b0; }
.toolbar button { width: 33px; height: 31px; display: grid; place-items: center; position: relative; }
.toolbar svg { width: 24px; height: 24px; }
.toolbar .active { background: #d9d9d9; border: 1px solid #a9a9a9; border-radius: 3px; width: 32px; margin-right: 1px; }
.off svg { opacity: .33; }
.menu::after { content: ""; position: absolute; right: 3px; bottom: 3px; border: 3px solid transparent; border-top-color: #666; border-bottom: 0; }
.grip { width: 15.600px; height: 18px; background: radial-gradient(circle, #aaa 35%, transparent 45%) 5px 0 / 3px 3px repeat-y, radial-gradient(circle, #aaa 35%, transparent 45%) 8px 1px / 3px 3px repeat-y; }
.grip.first { width: 12.500px; background-position: 4px 0, 7px 1px; }
.drop { width: 12.100px; display: grid; place-items: center; }
.drop::after { content: ""; border: 4px solid transparent; border-top-color: #555; border-bottom: 0; }
.sep { width: 7px; height: 20px; background: linear-gradient(90deg, transparent 3px, #ccc 3px, #ccc 4px, transparent 4px); }
.more { margin-left: auto; color: #444; font-size: 15px; padding-bottom: 3px; width: 9px; overflow: hidden; }

.ic-sans { font: 12px Inter, sans-serif; fill: #444; }
.ic-tiny { font: bold 8px "Open Sans", sans-serif; fill: #444; }
.ic-info { font: italic bold 17px "Liberation Serif", serif; fill: #fff; }
.ic-abc { font: bold 8px "DejaVu Sans", sans-serif; letter-spacing: -.4px; fill: #333; }
.ic-red { fill: #e11; }
.ic-help { font: 16px "Liberation Serif", serif; fill: #fff; }
.ic-db2 { font: 6.500px "DejaVu Sans", sans-serif; fill: #fff; }

.work { flex: 1; min-height: 0; display: flex; }
.docks { width: 454px; display: flex; flex-direction: column; }
.dock { display: flex; flex-direction: column; }
.browser { height: 348px; flex: none; }
.layers { flex: 1; min-height: 0; }
.dock-head { height: 20px; flex: none; display: flex; align-items: center; padding: 0 2px 0 4px; font-size: 11.500px; color: #222; }
.layers .dock-head { height: 21px; }
.dock-head span { flex: 1; }
.dockbtn { width: 11px; height: 11px; margin-left: 3px; fill: none; stroke: #555; }
.dock-tools { height: 30px; flex: none; display: flex; align-items: center; padding: 0 0 2px 3px; }
.dock-tools button { width: 25.100px; height: 24px; display: grid; place-items: center; }
.dock-tools .drop { width: 11.500px; }
.dock-tools svg { width: 16px; height: 16px; }
.dock-tools svg.small { width: 15px; height: 15px; }
.tree { flex: 1; min-height: 0; display: flex; border: 1px solid #b3b3b3; background: #fff; overflow: hidden; }
.tree ul { flex: 1; }
.tree li { height: 18px; display: flex; align-items: center; letter-spacing: -.13px; padding-left: 5px; color: #000; }
.tree li i { width: 11px; height: 10px; margin-right: 7px; display: grid; place-items: center; }
.tree li svg { width: 16px; height: 16px; margin-right: 6px; }
.tree li.child { padding-left: 25px; }
.closed::after { content: ""; border: 3.500px solid transparent; border-left: 5px solid #666; border-right: 0; }
.opened::after { content: ""; border: 4px solid transparent; border-top: 5px solid #666; border-bottom: 0; }
.scrollbar { width: 14px; border-left: 1px solid #b3b3b3; display: flex; flex-direction: column; background: linear-gradient(90deg, #fff, #eee); }
.scrollbar b { height: 13px; display: grid; place-items: center; background: #fafafa; }
.scrollbar b::after { content: ""; border: 4px solid transparent; }
.scrollbar .up::after { border-bottom-color: #444; border-top: 0; }
.scrollbar .down::after { border-top-color: #444; border-bottom: 0; }
.track { flex: 1; border-top: 1px solid #b3b3b3; }
.thumb { height: 44px; background: #e2e2e2; border: solid #b3b3b3; border-width: 1px 0; }
.hsplit { height: 5px; flex: none; margin-left: 219px; width: 18px; background: radial-gradient(circle, #aaa 35%, transparent 45%) 0 1px / 3px 3px repeat-x; }
.vsplit { width: 6px; flex: none; background: radial-gradient(circle, #aaa 35%, transparent 45%) 2px 0 / 3px 3px repeat-y; height: 18px; margin-top: 335px; }

.layerlist { flex: 1; border: 1px solid #b3b3b3; background: #fff; }
.layerlist li { height: 18px; display: flex; align-items: center; padding-left: 23px; font-weight: 700; color: #222; background: linear-gradient(#e6e6e6, #e6e6e6) right 1px / 3px 16px no-repeat; }
.layerlist li span { letter-spacing: .03px; }
.layerlist .check { margin-right: 6px; }
.check { width: 14px; height: 14px; flex: none; fill: #fff; stroke: #aaa; }
.check path { fill: none; stroke: #222; stroke-width: 1.700; }
.current { text-decoration: underline; text-underline-offset: 2px; }
.dot { width: 6px; height: 6px; border-radius: 50%; border: 1px solid #5c6868; margin: 0 11px 0 5px; }
.grey { background: #7d8b8f; }
.leaf { background: #79a765; }
.swatch { width: 16px; height: 16px; margin-right: 6px; border: 1px solid #5b3c2b; }
.brown { background: #91522d; }
.tan { background: #a57057; }

.canvas { flex: 1; background: #fff; border-left: 1px solid #b0b0b0; border-top: 1px solid #b0b0b0; border-bottom: 1px solid #b0b0b0; overflow: hidden; }
.canvas svg { display: block; }
.land { fill: #91522d; stroke: #362c24; stroke-width: .9; }
.county { fill: none; stroke: #332821; stroke-width: .95; }
.tract { fill: none; stroke: #332821; stroke-width: .75; }
.school { fill: #7b898c; stroke: #252d2e; stroke-width: 1.150; }

.status { height: 30px; flex: none; display: flex; align-items: center; padding: 0 0 0 4px; font-size: 11.500px; background: linear-gradient(#ececec, #e2e2e2); }
.status label { flex: none; white-space: nowrap; font-size: 11.500px; letter-spacing: -.22px; padding-top: 1px; }
.status svg { flex: none; }
.field { height: 23px; flex: none; display: flex; align-items: center; background: #fff; border: 1px solid #ababab; border-radius: 2px; overflow: hidden; white-space: nowrap; }
.field span { flex: 1; padding-left: 4px; }
.locate { width: 217px; height: 24px; font-size: 13px; letter-spacing: -.05px; color: #777; padding-left: 8px; margin-right: 26px; }
.locate svg { width: 13px; height: 13px; fill: none; stroke: #888; stroke-width: 1.300; margin-right: 3px; }
.status .l-coord { width: 60px; }
.coord { width: 119px; }
.coord span { padding-left: 9px; }
.mouse { width: 16px; height: 16px; margin: 0 13px 0 4px; }
.status .l-scale { width: 32px; }
.scale { width: 93px; }
.scale span, .mag span, .rot span, .coord span { font-size: 11.700px; }
.scale span { padding-left: 3px; letter-spacing: -.1px; }
.field b { width: 19px; align-self: stretch; border-left: 1px solid #bbb; background: linear-gradient(#fff, #f0f0f0); display: grid; place-items: center; }
.field .spin { width: 13px; align-content: center; gap: 5px; }
.tri { border: 4px solid transparent; border-top-color: #555; border-bottom: 0; }
.tri.flip { border-top: 0; border-bottom: 4px solid #555; }
.lock { width: 12px; height: 16px; margin: 0 9px 0 13px; }
.status .l-mag { width: 52px; }
.mag { width: 96px; margin-right: 9px; }
.status .l-rot { width: 53px; }
.rot { width: 92px; margin-right: 6px; }
.status .l-render { width: 54px; padding-left: 5px; }
.crs { width: 15px; height: 15px; margin-left: 4px; }
.status .l-epsg { width: 98px; padding-left: 3px; letter-spacing: -.12px; }
.bubble { width: 17px; height: 16px; }
```

FILE: map.js
```javascript
const NS = 'http://www.w3.org/2000/svg';
const map = document.getElementById('map');

let seed = 29;
function rnd() {
  seed = (seed * 1664525 + 1013904223) % 4294967296;
  return seed / 4294967296;
}
function add(parent, tag, attrs) {
  const el = document.createElementNS(NS, tag);
  for (const k in attrs) el.setAttribute(k, attrs[k]);
  parent.appendChild(el);
  return el;
}
const pairs = s => s.trim().split(/\s+/).map(p => p.split(',').map(Number));

// State boundary: surveyed north line, rivers in the east, surveyed south and west lines.
const north = pairs('582,217.700 606.700,219.300 652,222.300 695.300,224.300 730,225.300 796.700,226.300 840,226.600 881,225.700');
const east = pairs(`884,231 889,233.300 890.700,237.700 895,241 898.300,247.700 903.300,248.300 900.700,251.700 898,258.300 897.300,271.700 898,283.300 903.300,292.300 902,300 907.300,304.300 908.300,310 915,319 921.700,324.300 929.300,332.300 930.700,338.300 940,344.300 948.300,350 955.300,358.300 956,365 958,373.300 957.300,380 959.300,388.300 963.300,394.300 967.300,395.700 971.700,391.700 974,386.700 978.300,386 986.700,389.700 993.300,391.700 1001.700,397.300 1000.700,402.300 996.700,408.300 998.300,418.300 994,428.300 988.300,438.300 983.300,448.300 983,460 991.700,467 1001.700,475 1008.300,481.700 1016,483.300 1013.300,490 1023.300,489.300 1035,498.300 1041.700,506 1048,509 1051,519.300 1048.300,525 1054.300,535 1054,541.700 1051.700,548.300 1055,558.300 1060.700,566 1066.500,574 1069.500,573.500 1064.500,570 1071.700,570 1075,575 1074,580 1080.700,580 1080,588 1074,592 1079.300,598.300 1075,606.700 1073.300,616.700 1068.300,618.300 1061.700,612.700 1059.300,616.700 1057.300,626.700 1053.300,629.300 1051,626 1052.300,618.300 1048,617.700 1046,623.300 1049,630 1047,639.300 1041.700,641.700 1047.300,648.300 1038.300,649.300 1043.300,660 1036.700,665 1035,674`);
const south = pairs('981.700,674.300 988.300,666 995,656.700 1005,648.300 1006.700,636.700 1001.700,631.700 999,626 950,625.700 840,624.700 743,623 649.300,618.700 651,586.700 652.700,533.300 656,463.300 657.300,430 658.300,391.700 659,361.700');
const west = pairs('651.700,359 645,355 645,348.300 639.300,343.300 640,335 633.300,327.700 626,320 630.700,313.300 635,311 632,308 640,305 641.700,301.700 638,300 642.700,296.700 640,292.300 641.700,288.300 635,286.700 631.700,290 623.300,286.700 618,281 611.700,273.300 606,271 606.700,265 603.300,258.300 600,250 595,246.700 589.300,244.300 590.700,238.300 588.300,230 586.700,225 589.300,222.300 587,220.500 585,222.500 582,222.300');

function roughen(pts) {
  const out = [];
  pts.forEach((p, i) => {
    out.push(p);
    const q = pts[i + 1];
    if (!q) return;
    const n = Math.floor(Math.hypot(q[0] - p[0], q[1] - p[1]) / 2.2);
    for (let k = 1; k < n; k++) {
      out.push([p[0] + (q[0] - p[0]) * k / n + (rnd() - .5) * 1.8, p[1] + (q[1] - p[1]) * k / n + (rnd() - .5) * 1.8]);
    }
  });
  return out;
}
const outline = [...north, ...roughen(east), ...south, ...roughen(west)];
const d = 'M' + outline.map(p => p[0].toFixed(1) + ' ' + p[1].toFixed(1)).join('L') + 'Z';
add(add(map, 'clipPath', { id: 'state' }), 'path', { d });
add(map, 'path', { d, class: 'land' });
const lines = add(map, 'g', { 'clip-path': 'url(#state)' });

// Sheets hold coordinates in thirds of a map unit from their own origin.
const sheets = [
  {
    x: 570, y: 205,
    lines: `110,43 112,135;160,46 160,137;288,55 290,245;376,58 372,240 368,400;476,62 476,320;566,65 566,235 565,320;680,65 680,225;795,66 795,135 793,240;80,135 215,137 215,180;290,108 376,110;190,180 290,182;376,187 476,190;476,155 566,155;566,122 680,122;680,135 810,135;290,208 372,212;372,235 476,240 566,240;566,222 800,222;372,298 476,302;566,320 810,320;215,295 372,300;385,345 580,350;560,352 810,352;470,320 470,430 550,450;525,350 525,540;630,440 625,590;710,352 710,430 810,455;370,455 525,460;385,540 640,545;710,375 810,378;375,460 380,640;265,645 520,645;520,545 520,690;625,545 625,690;425,540 425,600;580,320 582,350;408,365 415,400 470,402;267,600 380,600;320,600 320,690;440,600 440,690;573,545 573,690;640,660 700,600 760,640`,
    pts: `87,92 117,84 114,114 192,87 240,87 246,57 288,92 336,81 231,117 228,122 276,117 117,156 147,174 183,156 192,159 270,144 303,159 351,152 240,168 258,171 168,219 225,207 306,207 288,225 273,246 237,234 231,240 219,249 339,255 387,264 252,258 234,272 246,276 231,285 240,294 261,285 225,303 276,300 306,294 339,297 363,303 390,213 426,225 465,237 426,255 453,189 417,148 420,144 429,90 441,117 477,102 534,81 519,117 516,159 573,123 561,195 576,195 506,210 513,207 519,216 546,225 537,255 519,290 519,282 618,177 660,156 648,99 747,114 714,168 744,183 786,195 759,231 762,267 618,243 576,294 621,297 672,297 699,303 729,306 741,309 765,312 657,318 804,312 420,300 462,300 435,318 408,330 387,339 408,357 435,357 462,348 489,327 534,351 564,348 612,354 567,387 531,414 489,435 450,441 420,438 444,468 417,480 471,501 513,495 519,462 558,468 591,438 615,402 657,396 687,405 717,399 744,402 768,381 771,405 771,411 774,429 750,438 804,414 639,456 624,462 624,474 678,459 708,484 591,491 591,486 636,498 639,531 696,522 696,534 690,546 657,564 762,489 801,462 684,588 729,582 756,597 759,534 543,534 555,552 570,570 540,588 558,597 576,615 585,612 615,618 636,612 540,633 507,528 510,592 504,600 465,592 474,597 471,588 444,584 444,594 420,522 384,516 369,477 384,456 348,444 387,423 363,417 369,390 333,408 327,402 342,357 315,351 282,336 273,366 288,387 285,405 240,408 246,378 243,357 213,387 234,327 207,339 189,336 369,552 378,570 348,576 369,585 390,594 411,606 354,615 326,620 330,615 303,597 303,588 282,621 266,663 324,666 384,660 438,639 474,642 459,657 513,660 489,678 711,627 687,627 726,636 735,636 708,657 729,678 762,672 585,684 636,686 804,594 797,650 322,688 240,440 252,441`,
    clusters: [[287, 445, 36, 20, 26], [318, 512, 46, 42, 82], [290, 560, 20, 16, 12]],
  },
  {
    x: 820, y: 205,
    lines: `43,64 44,250;134,62 131,252;182,115 182,165;208,170 208,255;53,255 47,515;155,255 155,315 182,330;182,330 182,435;240,390 248,490;302,440 302,490;98,435 90,510;196,495 196,810;284,495 284,545;256,620 256,780;350,465 350,510;0,136 43,136;44,93 134,93;44,150 134,152;134,165 235,168;44,250 248,257;0,350 50,352;53,340 182,340;182,330 262,332;50,430 182,435 225,430 300,440;90,400 182,400;196,490 302,493;0,513 196,515;302,465 408,468;60,590 196,595 256,620 330,615;68,735 196,735;68,655 68,810;80,152 82,190;129,180 129,250;300,493 400,560;320,690 320,780 380,780;0,600 60,590`,
    pts: `84,102 159,117 186,117 216,135 90,189 36,195 9,231 228,204 183,237 12,267 111,285 177,285 60,312 15,312 96,324 108,330 225,300 249,321 255,333 261,327 180,340 252,363 228,381 270,387 18,381 90,387 69,393 117,393 54,414 21,408 24,429 327,408 336,423 297,435 354,447 339,462 228,444 51,462 84,471 140,483 144,480 195,483 63,495 12,489 213,510 330,495 390,486 312,540 342,540 363,537 357,552 399,536 225,537 231,546 276,576 309,591 333,582 351,585 180,555 141,525 114,540 132,543 129,573 54,594 6,597 93,612 87,632 93,627 138,621 165,627 240,621 291,651 276,657 309,663 330,642 333,663 339,665 369,657 369,618 336,687 336,693 375,672 375,684 399,684 384,705 399,705 309,702 264,708 231,717 345,726 333,735 381,741 381,777 411,729 417,762 444,756 459,753 474,759 483,747 483,762 492,780 441,786 462,789 282,780 303,764 297,762 273,747 288,741 195,735 174,738 123,768 150,686 156,687 114,693 72,678 12,672 21,711 51,747 6,750 42,795 249,806 399,804 468,564 423,663 426,681 426,717 75,527 9,534 51,525`,
    clusters: [[492, 608, 38, 28, 34], [480, 648, 50, 30, 46], [472, 694, 32, 36, 36], [398, 593, 34, 17, 16], [440, 615, 26, 20, 12], [40, 547, 25, 14, 14], [62, 653, 24, 11, 10]],
  },
  {
    x: 640, y: 430,
    lines: `50,70 180,70;50,125 410,115;48,200 168,205 440,200;40,255 300,258;38,325 300,330 590,298;38,420 130,410 640,420;155,495 620,495;410,90 860,90;410,140 860,140;605,140 605,60;590,262 810,270 1080,265;705,315 838,318;830,415 890,412;725,425 725,470 830,473 828,490 965,495;990,350 1085,350;1080,265 1230,268;985,405 1110,445;965,505 1190,510;1070,548 1210,548;180,0 165,330;305,0 300,130;410,0 405,175;167,205 165,420 155,570;285,260 283,410;380,175 375,410 365,580;450,175 460,290 455,415;515,298 520,495;590,262 590,420;730,318 725,585;705,262 705,315;735,0 735,140;860,90 858,230;755,140 755,205;695,208 808,210 810,270;838,318 890,430;935,270 940,450;987,255 987,350;1070,350 1085,400;1080,265 1080,350;1185,400 1190,540;1115,440 1115,735;433,410 430,580;620,420 620,495;590,495 590,585;830,415 828,490;850,495 850,585;932,498 932,587;70,430 68,570;225,495 222,575;270,330 268,420 300,495;655,495 652,585;140,0 138,70;240,0 236,120;965,495 968,587;510,0 510,90;858,230 935,262 987,255;1050,440 1050,548 1070,590;520,170 520,210 590,262;410,140 405,200`,
    pts: `72,33 114,15 114,57 162,27 219,39 246,30 279,3 282,45 198,60 174,78 183,78 249,78 57,102 105,102 162,129 231,144 258,123 345,24 375,9 315,69 336,69 345,75 360,90 426,12 456,18 462,60 468,90 408,111 426,150 474,144 480,141 504,87 507,102 516,102 519,3 519,45 546,75 561,36 591,72 582,120 612,3 654,18 690,9 696,12 714,63 735,60 771,42 804,33 849,27 876,18 663,93 628,147 591,159 573,171 561,186 531,198 576,216 600,201 618,201 618,210 627,219 672,171 705,162 735,147 741,150 672,228 729,231 753,252 762,243 759,273 735,282 789,132 798,159 804,168 822,105 813,72 828,66 837,87 846,90 873,60 885,51 849,231 921,66 921,102 915,9 924,30 939,30 966,6 951,54 957,87 939,129 984,81 999,78 1023,72 1020,84 981,111 1002,114 1032,105 984,138 1056,141 1098,156 927,168 933,171 990,177 990,187 975,189 988,198 969,216 1012,214 1017,216 933,216 939,234 966,267 1143,231 1206,258 1044,279 1050,276 1116,291 1074,315 1173,294 1197,312 1164,315 1185,327 1197,327 1233,327 1215,345 1220,352 1188,351 1218,378 1131,366 1110,351 1161,381 1173,381 1191,387 1206,402 1194,414 1236,426 1092,399 1131,411 1155,435 1200,444 1266,465 1205,472 1212,475 1209,510 1260,504 1131,474 1152,495 1119,501 1119,537 1119,567 1155,570 1209,566 1206,558 1221,555 1185,606 1182,630 1155,630 1122,600 1131,600 1107,615 1098,588 1107,657 1101,663 1155,663 1173,663 1140,675 1194,678 1185,696 1077,696 1044,720 1086,720 1161,717 1155,708 1056,558 1056,534 1065,504 1065,459 1077,453 984,447 939,462 951,393 948,336 915,309 894,291 891,315 831,306 888,372 876,441 804,438 762,441 714,441 729,441 795,399 727,387 654,438 684,339 657,342 627,315 681,297 597,291 549,255 495,230 498,240 477,240 456,288 453,321 441,336 507,318 564,327 528,363 585,399 621,399 549,402 510,402 468,390 426,387 492,447 540,444 456,477 432,495 402,510 399,456 393,432 492,519 486,558 444,552 549,549 594,504 606,576 651,546 669,501 693,510 681,516 660,522 678,534 786,531 726,555 753,579 807,573 870,561 908,549 921,549 972,564 987,537 993,567 1008,504 1014,513 1020,507 1035,504 1008,402 102,177 135,162 183,174 78,219 120,231 66,258 120,278 126,279 111,324 159,312 192,312 222,306 234,225 285,198 294,168 327,156 348,156 381,186 384,213 285,246 324,249 360,252 399,245 393,246 258,288 288,309 252,327 279,339 315,291 336,303 351,297 381,318 315,342 297,357 387,354 216,366 222,392 222,399 150,369 150,405 108,372 90,372 111,380 75,363 48,369 105,426 120,447 123,459 36,460 33,467 57,468 81,465 96,465 88,462 81,498 129,492 153,498 165,495 195,480 177,441 190,450 198,447 225,438 243,438 264,429 282,411 303,420 279,459 294,450 312,471 300,486 342,471 324,477 345,450 378,450 366,426 357,411 387,396 399,399 321,507 354,519 351,531 381,522 363,544 378,540 207,519 189,522 183,546 261,537 75,525 78,537 102,555 57,555 51,555 30,561 316,576 303,396 335,418`,
    clusters: [[345, 372, 26, 28, 32], [345, 412, 16, 12, 7], [60, 398, 22, 12, 14]],
  },
];

for (const s of sheets) {
  for (const l of s.lines.split(';')) {
    const p = pairs(l).map(([x, y]) => (s.x + x / 3).toFixed(1) + ',' + (s.y + y / 3).toFixed(1)).join(' ');
    add(lines, 'polyline', { points: p, class: 'county' });
  }
}

// Block group edges join the nodes of a jittered mesh; some are straight roads, some follow creeks.
function bend(p, q, amount) {
  const len = Math.hypot(q[0] - p[0], q[1] - p[1]);
  if (len < 3) return [q];
  const k = (rnd() - .5) * amount;
  const m = [(p[0] + q[0]) / 2 - (q[1] - p[1]) * k, (p[1] + q[1]) / 2 + (q[0] - p[0]) * k];
  return [...bend(p, m, amount), ...bend(m, q, amount)];
}
function edge(p, q) {
  const pts = rnd() < .3 ? [[q[0], p[1]], q] : bend(p, q, .75);
  add(lines, 'path', { class: 'tract', d: 'M' + [p, ...pts].map(v => v[0].toFixed(1) + ' ' + v[1].toFixed(1)).join('L') });
}
function mesh(x0, y0, x1, y1, gap, keep, inside) {
  const nodes = [];
  for (let y = y0; y < y1; y += gap) {
    const row = [];
    for (let x = x0; x < x1; x += gap) row.push([x + (rnd() - .5) * gap * .8, y + (rnd() - .5) * gap * .8]);
    nodes.push(row);
  }
  nodes.forEach((row, j) => row.forEach((p, i) => {
    if (!inside(p)) return;
    if (row[i + 1] && rnd() < keep) edge(p, row[i + 1]);
    if (nodes[j + 1] && rnd() < keep) edge(p, nodes[j + 1][i]);
  }));
}
mesh(580, 215, 1085, 680, 15, .56, () => true);
const towns = [[672, 360, 18], [682, 385, 20], [955, 420, 34], [952, 450, 30], [975, 480, 20], [755, 553, 16], [757, 605, 17], [835, 387, 15], [843, 423, 16], [800, 462, 18], [845, 495, 14], [968, 495, 15], [660, 562, 13], [645, 310, 13], [865, 600, 11], [1040, 545, 14], [800, 440, 18], [985, 600, 14]];
for (const [x, y, r] of towns) {
  mesh(x - r, y - r, x + r, y + r, 5.5, .6, p => Math.hypot(p[0] - x, p[1] - y) < r);
}

const schools = add(map, 'g', { class: 'school' });
for (const s of sheets) {
  for (const [cx, cy, rx, ry, n] of s.clusters) {
    for (let i = 0; i < n; i++) {
      const a = i * 2.39996, q = Math.sqrt((i + .5) / n);
      const x = cx + Math.cos(a) * q * rx + (rnd() - .5) * 6;
      const y = cy + Math.sin(a) * q * ry + (rnd() - .5) * 6;
      add(schools, 'circle', { cx: (s.x + x / 3).toFixed(1), cy: (s.y + y / 3).toFixed(1), r: 2.75 });
    }
  }
  for (const [x, y] of pairs(s.pts)) {
    add(schools, 'circle', { cx: (s.x + x / 3).toFixed(1), cy: (s.y + y / 3).toFixed(1), r: 2.75 });
  }
}
```
